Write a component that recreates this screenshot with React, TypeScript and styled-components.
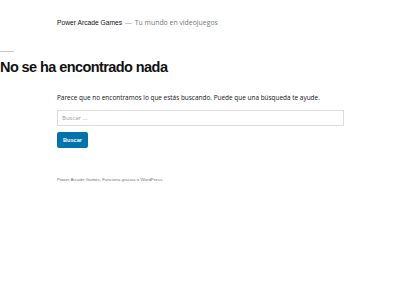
import styled, { createGlobalStyle } from 'styled-components';

export default function App() {
  return (
    <>
      <GlobalStyle />
      <Page>
        <Header>
          <SiteTitle>Power Arcade Games</SiteTitle>
          <Dash>—</Dash>
          <Tagline>Tu mundo en videojuegos</Tagline>
        </Header>

        <Main>
          <Rule />
          <PageTitle>No se ha encontrado nada</PageTitle>

          <Content>
            <Message>
              Parece que no encontramos lo que estás buscando. Puede que una búsqueda te ayude.
            </Message>
            <SearchForm onSubmit={(e) => e.preventDefault()}>
              <SearchInput type="search" placeholder="Buscar …" />
              <SearchButton type="submit">Buscar</SearchButton>
            </SearchForm>
          </Content>
        </Main>

        <Footer>Power Arcade Games, Funciona gracias a WordPress.</Footer>
      </Page>
    </>
  );
}

const GlobalStyle = createGlobalStyle`
  body {
    margin: 0;
    background: #ffffff;
    font-family: "Liberation Sans", Arial, sans-serif;
  }
`;

const Page = styled.div`
  width: 400px;
  height: 300px;
  background: #fff;
  overflow: hidden;
`;

const Header = styled.header`
  display: flex;
  align-items: baseline;
  gap: 3px;
  padding: 16px 0 0 57px;
  height: 15px;
  line-height: 14px;
`;

const SiteTitle = styled.span`
  font-size: 6.7px;
  color: #111;
`;

const Dash = styled.span`
  font-size: 6.7px;
  color: #999;
`;

const Tagline = styled.span`
  font-family: "Open Sans", sans-serif;
  font-size: 6.9px;
  color: #767676;
`;

const Main = styled.main`
  padding-top: 20px;
`;

const Rule = styled.div`
  width: 14px;
  height: 1px;
  background: #c8c8c8;
`;

const PageTitle = styled.h1`
  margin: 6px 0 0;
  font-size: 14.5px;
  line-height: 18px;
  font-weight: 700;
  letter-spacing: -0.58px;
  color: #111;
`;

const Content = styled.div`
  width: 287px;
  padding: 17px 0 0 57px;
`;

const Message = styled.p`
  margin: 0 0 7px;
  font-family: "Open Sans", sans-serif;
  font-size: 6.45px;
  line-height: 10px;
  color: #111;
`;

const SearchForm = styled.form`
  display: flex;
  flex-direction: column;
  align-items: flex-start;
  gap: 6px;
`;

const SearchInput = styled.input`
  box-sizing: border-box;
  width: 287px;
  height: 16px;
  padding: 0 4px;
  border: 1px solid #dcdcdc;
  font-family: "Open Sans", sans-serif;
  font-size: 6px;
  color: #111;
  outline: none;

  &::placeholder {
    color: #999;
  }
`;

const SearchButton = styled.button`
  box-sizing: border-box;
  width: 31px;
  height: 16px;
  padding: 0;
  border: none;
  border-radius: 2px;
  background: #0073aa;
  color: #fff;
  font-family: "Liberation Sans", Arial, sans-serif;
  font-size: 5.6px;
  font-weight: 700;
  cursor: pointer;
`;

const Footer = styled.footer`
  padding: 28px 0 0 57px;
  font-size: 4.4px;
  line-height: 8px;
  color: #767676;
`;
